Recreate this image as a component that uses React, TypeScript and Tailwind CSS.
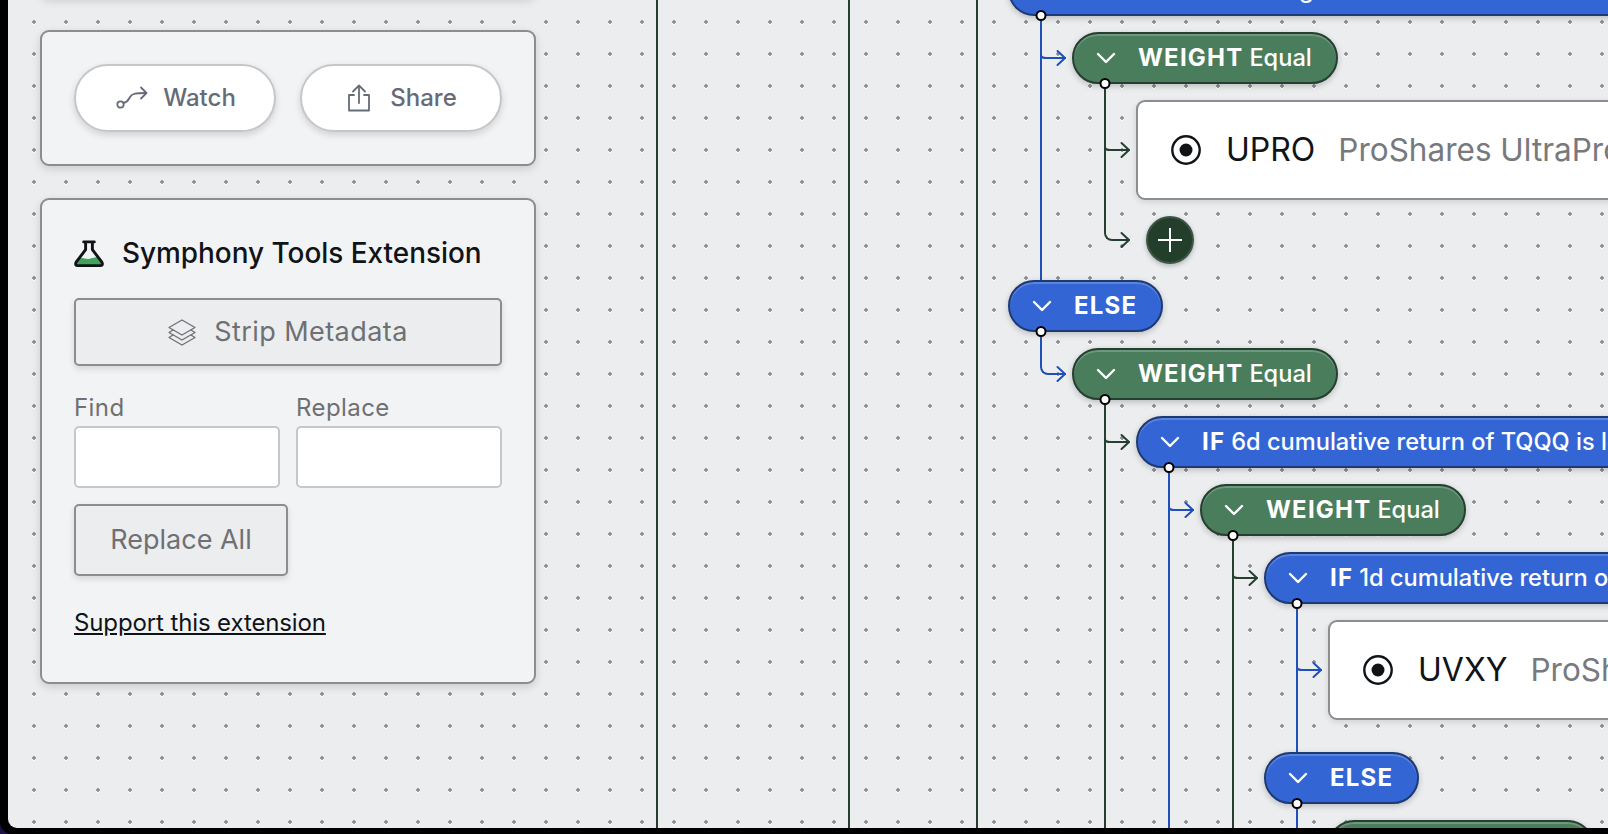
import React from "react";

type Tone = "blue" | "green";

const lineTone: Record<Tone, string> = {
  blue: "bg-[#1f4fb8]",
  green: "bg-[#254030]",
};

const elbowTone: Record<Tone, string> = {
  blue: "border-[#1f4fb8]",
  green: "border-[#254030]",
};

const strokeTone: Record<Tone, string> = {
  blue: "#1f4fb8",
  green: "#254030",
};

const pillTone: Record<Tone, string> = {
  blue: "bg-[#3366d4] border-[#1e3a75]",
  green: "bg-[#4a7d5c] border-[#254030]",
};

// arrow going into a node, drawn from the parent's line
const Link = ({ tone, elbow }: { tone: Tone; elbow?: boolean }) => (
  <>
    {elbow && (
      <div
        className={`absolute left-[-32px] top-[-16px] bottom-[calc(50%-1px)] w-[12px] border-l-2 border-b-2 rounded-bl-[8px] ${elbowTone[tone]}`}
      ></div>
    )}
    <svg
      className="absolute left-[-32px] top-1/2 mt-[-8px] overflow-visible"
      width="26"
      height="16"
      viewBox="0 0 26 16"
      fill="none"
      stroke={strokeTone[tone]}
      strokeWidth="2"
      strokeLinecap="round"
      strokeLinejoin="round"
    >
      <path d={elbow ? "M11 8H25" : "M1 6Q2 8 6 8H25"} />
      <path d="M17.5 1L25 8L17.5 15" />
    </svg>
  </>
);

// one child of a node; carries the parent's vertical line
const Row = ({
  tone,
  through,
  elbow,
  className = "",
  children,
}: {
  tone: Tone;
  through?: boolean;
  elbow?: boolean;
  className?: string;
  children: React.ReactNode;
}) => (
  <div className={`relative flex flex-col items-start gap-[16px] ${className}`}>
    {!elbow && (
      <div
        className={`absolute left-[-32px] top-[-16px] w-[2px] ${through ? "bottom-[-16px]" : "bottom-0"} ${lineTone[tone]}`}
      ></div>
    )}
    {children}
  </div>
);

const Children = ({ children }: { children: React.ReactNode }) => (
  <div className="ml-[64px] flex flex-col gap-[16px] w-full">{children}</div>
);

const Pill = ({
  tone,
  label,
  detail,
  children,
}: {
  tone: Tone;
  label: string;
  detail?: string;
  children?: React.ReactNode;
}) => (
  <div
    className={`relative h-[52px] w-fit shrink-0 flex items-center gap-[22px] pl-[22px] pr-[24px] rounded-full border-2 text-white whitespace-nowrap shadow-[inset_0_2px_0_rgba(255,255,255,0.2),0_2px_6px_rgba(0,0,0,0.22)] ${pillTone[tone]}`}
  >
    <div className="absolute inset-[-2px]">{children}</div>
    <svg width="20" height="12" viewBox="0 0 20 12" fill="none" stroke="white" strokeWidth="2.4" strokeLinecap="round" strokeLinejoin="round">
      <path d="M2 2L10 10L18 2" />
    </svg>
    <span>
      <span className="text-[24px] font-bold tracking-[0.05em]">{label}</span>
      {detail && <span className="ml-[6px] text-[23.6px] font-medium">{detail}</span>}
    </span>
    <span className="absolute left-[31px] bottom-[-7px] -translate-x-1/2 size-[11px] rounded-full bg-white border-2 border-black z-10"></span>
  </div>
);

const Radio = () => (
  <svg width="30" height="30" viewBox="0 0 30 30" fill="none" className="shrink-0">
    <circle cx="15" cy="15" r="13.7" stroke="#111417" strokeWidth="2.4" />
    <circle cx="15" cy="15" r="6.5" fill="#111417" />
  </svg>
);

const Asset = ({ ticker, name, children }: { ticker: string; name: string; children?: React.ReactNode }) => (
  <div className="relative h-[100px] w-[800px] shrink-0 flex items-center pl-[33px] bg-white border-2 border-[#8b8d91] rounded-l-[9px] whitespace-nowrap text-[32px] shadow-[0_2px_6px_rgba(0,0,0,0.12)]">
    <div className="absolute inset-[-2px]">{children}</div>
    <Radio />
    <span className="ml-[25px] text-[#111417]">{ticker}</span>
    <span className="ml-[23px] text-[31.5px] text-[#77797d]">{name}</span>
  </div>
);

const Panel = ({ className = "", children }: { className?: string; children?: React.ReactNode }) => (
  <div className={`w-[496px] bg-[#f2f3f5] border-2 border-[#8b8d91] rounded-[9px] shadow-[0_3px_9px_rgba(0,0,0,0.14)] ${className}`}>
    {children}
  </div>
);

const RoundButton = ({ icon, label }: { icon: React.ReactNode; label: string }) => (
  <button className="h-[68px] flex items-center justify-center gap-[17px] bg-white border-2 border-[#c6c7ca] rounded-full text-[24px] font-medium text-[#666b78] shadow-[0_3px_7px_rgba(0,0,0,0.14)]">
    {icon}
    {label}
  </button>
);

export default function App() {
  return (
    <div className="h-[834px] w-full overflow-hidden bg-[#1e1245] font-['Inter',sans-serif]">
      <div className="h-full bg-black rounded-bl-[12px] pl-[8px] pb-[6px]">
        <div className="flex h-full rounded-bl-[9px] overflow-hidden bg-[#ecedef] bg-[radial-gradient(circle,#8d8f94_1.5px,transparent_2.1px),radial-gradient(circle,#ffffff_1.5px,transparent_2.1px)] [background-size:32px_32px] [background-position:10px_6px,10px_7px]">
          {/* side column */}
          <div className="w-[650px] shrink-0 border-r-2 border-[#254030] pl-[32px] flex flex-col gap-[32px]">
            <Panel className="h-[20px] mt-[-22px] shrink-0" />
            <Panel className="h-[136px] shrink-0 px-[32px] grid grid-cols-2 gap-[24px] items-center">
              <RoundButton
                label="Watch"
                icon={
                  <svg width="32" height="25" viewBox="-2 0 32 25" fill="none" stroke="#666b78" strokeWidth="1.8" strokeLinecap="round" strokeLinejoin="round" className="overflow-visible">
                    <circle cx="4.5" cy="18.5" r="3.2" />
                    <path d="M7.5 17C12 16 12.5 13.5 14 11C16 7.5 20 7 30 7" />
                    <path d="M25 1.5L30.5 7L25 12.5" />
                  </svg>
                }
              />
              <RoundButton
                label="Share"
                icon={
                  <svg width="28" height="28" viewBox="-2 0 28 28" fill="none" stroke="#666b78" strokeWidth="1.8" strokeLinecap="round" strokeLinejoin="round">
                    <path d="M7 11H2V26.5H22V11H17" />
                    <path d="M12 19V2" />
                    <path d="M6 7.5L12 1.5L18 7.5" />
                  </svg>
                }
              />
            </Panel>
            <Panel className="shrink-0 px-[32px] pt-[34px] pb-[41px]">
              <div className="h-[40px] flex items-center gap-[18px] text-[27.9px] font-medium text-[#111417]">
                <svg width="30" height="28" viewBox="0 0 31 28" fill="none" className="shrink-0">
                  <path d="M4 19.5C9 16.5 12 20 16 19C20 18 23 16.5 26 18L29 23.5Q29.5 26 27 26H4Q1.5 26 2 23.5Z" fill="#3fa35c" />
                  <path d="M10 1.5H21M12 1.5V9.5L2.2 22.5Q0.6 26 4 26H27Q30.4 26 28.8 22.5L19 9.5V1.5" stroke="#111417" strokeWidth="3" strokeLinejoin="round" strokeLinecap="round" />
                </svg>
                Symphony Tools Extension
              </div>
              <button className="mt-[24px] h-[68px] w-full flex items-center justify-center gap-[18px] bg-[#ecedef] border-2 border-[#8b8d91] rounded-[5px] text-[27px] tracking-[0.016em] text-[#6e7074] shadow-[0_3px_6px_rgba(0,0,0,0.12)]">
                <svg width="28" height="27" viewBox="0 0 28 27" fill="none" stroke="#6e7074" strokeWidth="1.3" strokeLinejoin="round" strokeLinecap="round">
                  <path d="M14 1L27 8.5L14 16L1 8.5Z" />
                  <path d="M5 11L1 13.5L14 21L27 13.5L23 11" />
                  <path d="M5 16L1 18.5L14 26L27 18.5L23 16" />
                </svg>
                Strip Metadata
              </button>
              <div className="mt-[24px] grid grid-cols-2 gap-[16px]">
                {["Find", "Replace"].map((label) => (
                  <label key={label} className="block text-[24px] leading-[36px] tracking-[0.018em] text-[#6e7074]">
                    {label}
                    <input className="block w-full h-[62px] bg-white border-2 border-[#c6c7ca] rounded-[5px]" />
                  </label>
                ))}
              </div>
              <button className="mt-[16px] h-[72px] w-[214px] flex items-center justify-center bg-[#ecedef] border-2 border-[#8b8d91] rounded-[5px] text-[27px] text-[#6e7074] shadow-[0_3px_6px_rgba(0,0,0,0.12)]">
                Replace All
              </button>
              <a className="mt-[29px] block text-[24px] leading-[36px] tracking-[-0.005em] text-[#111417] underline">Support this extension</a>
            </Panel>
          </div>

          {/* empty canvas columns */}
          <div className="w-[192px] shrink-0 border-r-2 border-[#254030]"></div>
          <div className="w-[128px] shrink-0 border-r-2 border-[#254030]"></div>

          {/* symphony tree */}
          <div className="flex-1 min-w-0 overflow-hidden pl-[30px]">
            <div className="mt-[-36px] flex flex-col items-start gap-[16px]">
              <Pill tone="blue" label="IF" detail="20d returns strong and it is above the 200d moving average of the index in the market" />
              <Children>
                <Row tone="blue" through>
                  <Pill tone="green" label="WEIGHT" detail="Equal">
                    <Link tone="blue" />
                  </Pill>
                  <Children>
                    <Row tone="green">
                      <Asset ticker="UPRO" name="ProShares UltraPro S&P500">
                        <Link tone="green" />
                      </Asset>
                    </Row>
                    <Row tone="green" elbow>
                      <div className="relative h-[48px] w-full">
                        <Link tone="green" elbow />
                        <button className="ml-[10px] size-[48px] flex items-center justify-center rounded-full bg-[#233f2b] border-2 border-[#3d5545] shadow-[0_2px_5px_rgba(0,0,0,0.25)]">
                          <svg width="24" height="24" viewBox="0 0 24 24" stroke="white" strokeWidth="2">
                            <path d="M12 0V24M0 12H24" />
                          </svg>
                        </button>
                      </div>
                    </Row>
                  </Children>
                </Row>
              </Children>
              <Pill tone="blue" label="ELSE" />
              <Children>
                <Row tone="blue" elbow>
                  <Pill tone="green" label="WEIGHT" detail="Equal">
                    <Link tone="blue" elbow />
                  </Pill>
                  <Children>
                    <Row tone="green">
                      <Pill tone="blue" label="IF" detail="6d cumulative return of TQQQ is less than -5% over the period">
                        <Link tone="green" />
                      </Pill>
                      <Children>
                        <Row tone="blue">
                          <Pill tone="green" label="WEIGHT" detail="Equal">
                            <Link tone="blue" />
                          </Pill>
                          <Children>
                            <Row tone="green">
                              <Pill tone="blue" label="IF" detail="1d cumulative return of SQQQ is greater than 2% over the period">
                                <Link tone="green" />
                              </Pill>
                              <Children>
                                <Row tone="blue" through className="pb-[16px]">
                                  <Asset ticker="UVXY" name="ProShares Ultra VIX Short-Term Futures ETF">
                                    <Link tone="blue" />
                                  </Asset>
                                </Row>
                              </Children>
                              <Pill tone="blue" label="ELSE" />
                              <Children>
                                <Row tone="blue" elbow>
                                  <Pill tone="green" label="WEIGHT" detail="Equal">
                                    <Link tone="blue" elbow />
                                  </Pill>
                                </Row>
                              </Children>
                            </Row>
                          </Children>
                        </Row>
                      </Children>
                    </Row>
                  </Children>
                </Row>
              </Children>
            </div>
          </div>
        </div>
      </div>
    </div>
  );
}
